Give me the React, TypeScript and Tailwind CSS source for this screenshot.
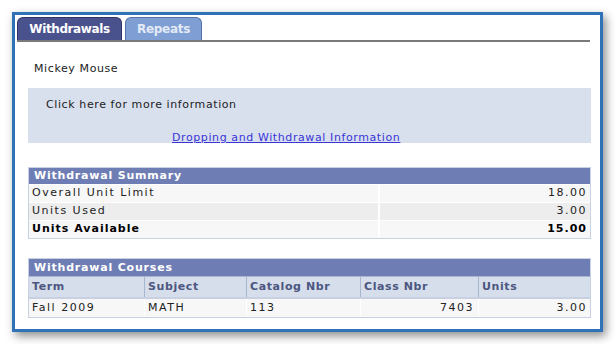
const font = { fontFamily: '"DejaVu Sans", Verdana, sans-serif' };

const summary = [
  { label: "Overall Unit Limit", value: "18.00", bg: "bg-[#f7f7f7]", bold: false },
  { label: "Units Used", value: "3.00", bg: "bg-[#ededed]", bold: false },
  { label: "Units Available", value: "15.00", bg: "bg-[#f7f7f7]", bold: true },
];

const courseCols = [
  { name: "Term", w: "w-[116px]" },
  { name: "Subject", w: "w-[102px]" },
  { name: "Catalog Nbr", w: "w-[114px]" },
  { name: "Class Nbr", w: "w-[118px]" },
  { name: "Units", w: "flex-1" },
];

export default function App() {
  return (
    <div className="w-[616px] h-[344px] bg-white pt-[12px] pl-[12px] text-[11px] text-[#222]" style={font}>
      <div className="w-[591px] h-[320px] border-[3px] border-[#2f72b8] bg-white shadow-[3px_4px_9px_rgba(0,0,0,0.45)] pt-[2px] pl-[2px] pr-[9px]">
        {/* tabs */}
        <div className="flex items-end gap-[3px] w-[573px] border-b-2 border-[#7a7a7a] h-[25px]">
          <div className="h-[23px] w-[105px] rounded-t-[6px] bg-[#49528c] border border-b-0 border-[#2e3566] text-white font-bold text-[12px] tracking-[-0.4px] flex items-center justify-center">
            Withdrawals
          </div>
          <div className="h-[23px] w-[77px] rounded-t-[6px] bg-[#7f9fd4] border border-b-0 border-[#5474a8] text-[#e3eaf6] font-bold text-[12px] tracking-[-0.3px] flex items-center justify-center">
            Repeats
          </div>
        </div>

        <div className="pl-[11px] tracking-[0.6px]">
          <div className="pl-[6px] pt-[19px] h-[46px]">Mickey Mouse</div>

          <div className="bg-[#d8e0ee] h-[55px] pl-[18px] pt-[9px]">
            <div>Click here for more information</div>
            <div className="pl-[126px] pt-[16px]">
              <span className="text-[#3a35d6] underline">Dropping and Withdrawal Information</span>
            </div>
          </div>

          {/* summary */}
          <div className="mt-[24px] border border-[#c8d1e2]">
            <div className="h-[16px] bg-[#6e7db3] text-white font-bold tracking-[0.8px] leading-[16px] pl-[5px]">
              Withdrawal Summary
            </div>
            {summary.map((r) => (
              <div
                key={r.label}
                className={`flex h-[18px] items-center border-t border-white ${r.bg} ${r.bold ? "font-bold text-black tracking-[1px]" : "tracking-[1.5px]"}`}
              >
                <div className="w-[351px] pl-[3px] border-r-2 border-white h-full flex items-center">{r.label}</div>
                <div className="flex-1 text-right pr-[3px]">{r.value}</div>
              </div>
            ))}
          </div>

          {/* courses */}
          <div className="mt-[19px] border border-[#c8d1e2]">
            <div className="h-[17px] bg-[#6e7db3] text-white font-bold tracking-[0.8px] leading-[17px] pl-[5px]">
              Withdrawal Courses
            </div>
            <div className="flex h-[21px] bg-[#d6deec] border-t border-[#a8b5ce]">
              {courseCols.map((c, i) => (
                <div
                  key={c.name}
                  className={`${c.w} h-full flex items-center pl-[3px] font-bold text-[#4c5680] ${i < courseCols.length - 1 ? "border-r border-[#a8b5ce]" : ""}`}
                >
                  {c.name}
                </div>
              ))}
            </div>
            <div className="flex h-[20px] bg-[#f7f7f7] border-t-2 border-[#c8d1e2] tracking-[1.5px]">
              <div className="w-[116px] pl-[3px] flex items-center border-r border-white">Fall 2009</div>
              <div className="w-[102px] pl-[3px] flex items-center border-r border-white">MATH</div>
              <div className="w-[114px] pl-[3px] flex items-center border-r border-white">113</div>
              <div className="w-[118px] pr-[4px] flex items-center justify-end border-r border-white">7403</div>
              <div className="flex-1 pr-[3px] flex items-center justify-end">3.00</div>
            </div>
          </div>
        </div>
      </div>
    </div>
  );
}
